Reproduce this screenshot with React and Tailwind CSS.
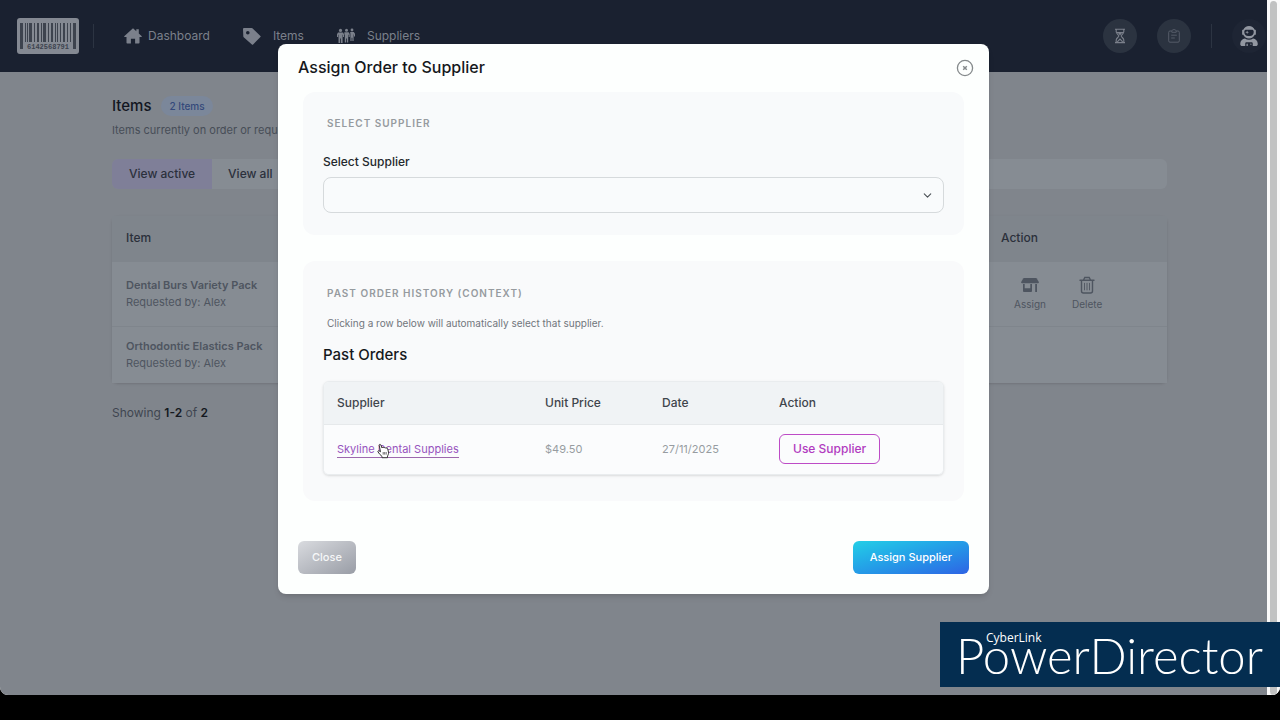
import { useState } from 'react'
import { FaUserAstronaut } from 'react-icons/fa'
import { ChevronDown } from 'lucide-react'

const NAV = [
  { id: 'dashboard', label: 'Dashboard' },
  { id: 'items', label: 'Items' },
  { id: 'suppliers', label: 'Suppliers' },
]

const ITEMS = [
  { id: 1, name: 'Dental Burs Variety Pack', by: 'Alex', actions: true },
  { id: 2, name: 'Orthodontic Elastics Pack', by: 'Alex', actions: false },
]

const PAST_ORDERS = [
  { id: 1, supplier: 'Skyline Dental Supplies', price: '$49.50', date: '27/11/2025' },
]

// [x, width] of each bar in the logo
const BARS = [
  [3, 3], [8, 1], [10, 1], [12, 3], [17, 1], [20, 2], [24, 1], [26, 3], [31, 1], [34, 2],
  [38, 1], [40, 1], [43, 1], [46, 2], [50, 1], [53, 1], [56, 3],
]

function BarcodeLogo() {
  return (
    <svg width="62" height="36" viewBox="0 0 62 36" role="img" aria-label="Home">
      <rect width="62" height="36" rx="3" fill="#848992" />
      {BARS.map(([x, w], i) => (
        <rect key={x} x={x} y="5" width={w} height={i === 0 || i === BARS.length - 1 ? 26 : 19} fill="#3d434e" />
      ))}
      <text x="31" y="31" textAnchor="middle" fontSize="7" fontWeight="600" fontFamily="Liberation Mono, monospace" fill="#3d434e">
        6142568791
      </text>
    </svg>
  )
}

function HomeIcon() {
  return (
    <svg width="18" height="16" viewBox="0 0 18 16" fill="currentColor">
      <path d="M9 .3 12.300 3.200V1.300h2.500v4.200L17.800 8.200q.3.700-.5.800H15.500v5.700q0 .8-.8.800h-3.600v-4.800H6.900v4.800H3.300q-.8 0-.8-.8V9H.700Q-.100 8.900.200 8.200z" />
    </svg>
  )
}

function TagIcon() {
  return (
    <svg width="18" height="17" viewBox="0 0 18 17" fill="currentColor" fillRule="evenodd">
      <path d="M1 0h7.500q.5 0 .9.300l8 7.600q.6.600 0 1.200l-7.300 7.400q-.6.500-1.200 0L.700 9.200Q.300 8.800.300 8.300L0 1Q0 0 1 0zM4.800 3a1.800 1.800 0 1 0 0 3.600 1.800 1.800 0 0 0 0-3.600z" />
    </svg>
  )
}

function PeopleIcon() {
  return (
    <svg width="18" height="16" viewBox="0 0 18 16" fill="currentColor">
      <circle cx="3.500" cy="2.400" r="1.600" />
      <path d="M1 4.600h5l1 1.600V9H6V6.800h-.4V15H3.900v-4.600h-.8V15H1.500V6.800h-.4V9H0V6.200z" />
      <circle cx="9.500" cy="2.200" r="1.500" />
      <path d="M7.300 4.300h4.400l1 1.700V9h-1V6.800h-.5V14.500H9.900v-4h-.8v4H7.800V6.800h-.4z" />
      <circle cx="15" cy="2" r="1.400" />
      <path d="M13.200 4h3.600L18 5.800V8.400h-1V6.500h-.4V13h-1.200V9.800h-.8V13h-1.200V6z" />
    </svg>
  )
}

function HourglassIcon() {
  return (
    <svg width="12" height="16" viewBox="0 0 12 16" fill="none" stroke="currentColor" strokeWidth="1.100">
      <path d="M1 1.200h10M1 14.600h10M2.200 1.200v2.600c0 1.700 2.600 3 2.600 4.100s-2.600 2.400-2.600 4.100v2.600M9.800 1.200v2.600c0 1.700-2.600 3-2.600 4.100s2.600 2.400 2.600 4.100v2.600M3 4.500h6M3.300 13.800 6 11l2.700 2.800" />
      <path d="M4 5h4L6 7.500z" fill="currentColor" stroke="none" />
    </svg>
  )
}

function ClipboardIcon() {
  return (
    <svg width="12" height="14" viewBox="0 0 12 14" fill="none" stroke="currentColor" strokeWidth="1">
      <path d="M4 2H2Q.700 2 .700 3.300v8.600Q.700 13.200 2 13.200h8q1.300 0 1.300-1.300V3.300Q11.300 2 10 2H8" />
      <path d="M3.800 1.800 5 .700h2l1.200 1.100v1.500H3.800zM3.200 6.200h5.600M3.200 9h3.600" />
    </svg>
  )
}

function StoreIcon() {
  return (
    <svg width="18" height="18" viewBox="0 0 18 18" fill="currentColor" fillRule="evenodd">
      <path d="M3 2h12q.5 0 .8.500L17.800 6q.3 1.300-.8 1.300H1Q-.100 7.300.200 6l2-3.500Q2.500 2 3 2z" />
      <path d="M2 8h1.700v4.300h5.600V8H11v7q0 .9-.9.900H2.900Q2 15.900 2 15zM14.200 8H16v7.900h-1.800z" />
    </svg>
  )
}

function TrashIcon() {
  return (
    <svg width="16" height="18" viewBox="0 0 16 18" fill="none" stroke="currentColor" strokeLinecap="round">
      <path d="M1 4.200h14M4.500 4 5.800 1.500h4.400L11.500 4M2.500 4.500V15q0 2 2 2h7q2 0 2-2V4.500" strokeWidth="1.400" />
      <path d="M5.500 7.300v6.600M8 7.300v6.600M10.500 7.300v6.600" strokeWidth=".9" />
    </svg>
  )
}

function HandCursor() {
  return (
    <svg width="13" height="16" viewBox="0 0 13 16" className="pointer-events-none absolute top-0.5 left-10">
      <path
        d="M3.500 8.800 2.200 2.300C2 1.300 3.400.900 3.800 1.900L5 5c.3-.9 1.700-.9 2 0 .4-.7 1.600-.5 1.900.3.500-.6 1.600-.3 1.800.5l.8 3.300c.3 1.800-.5 2.900-1 4v1.600H5v-1.300C3.700 12.300 2 10.700 1 8.900c-.4-1 .6-1.600 1.300-.9z"
        fill="#fff" stroke="#333" strokeWidth="1"
      />
      <path d="M6.200 9v2.600M7.700 9v2.600M9.200 9v2.600" stroke="#333" strokeWidth=".7" />
    </svg>
  )
}

const NAV_ICONS = {
  dashboard: <HomeIcon />,
  items: <TagIcon />,
  suppliers: <PeopleIcon />,
}

function Header() {
  return (
    <header className="flex h-[72px] shrink-0 items-center overflow-hidden bg-[#1a2130] pr-px pl-[17px] text-[#7b808b]">
      <a href="#home"><BarcodeLogo /></a>
      <div className="ml-3.5 h-6 w-px bg-[#2c3442]" />
      <nav className="ml-[30px] flex items-center gap-[33px] text-xs">
        {NAV.map(n => (
          <a key={n.id} href={`#${n.id}`} className={`flex items-center ${n.id === 'dashboard' ? 'gap-1.5' : 'gap-3'}`}>
            {NAV_ICONS[n.id]}
            <span>{n.label}</span>
          </a>
        ))}
      </nav>
      <div className="ml-auto flex items-center">
        <button aria-label="Pending" className="flex size-[34px] items-center justify-center rounded-full bg-[#2b3340]"><HourglassIcon /></button>
        <button aria-label="Orders" className="ml-5 flex size-[34px] items-center justify-center rounded-full bg-[#2b3340] text-[#555c68]"><ClipboardIcon /></button>
        <div className="ml-5 h-6 w-px bg-[#2c3442]" />
        <button aria-label="Account" className="ml-5 flex size-[34px] items-center justify-center rounded-full bg-[#1e2534] text-[#9297a1]">
          <FaUserAstronaut size={20} />
        </button>
      </div>
    </header>
  )
}

function ItemsPage() {
  return (
    <main className="flex-1 pr-[100px] pl-28 pt-[22px]">
      <div className="flex items-center gap-2.5">
        <h1 className="text-[15px] leading-6 font-medium text-[#12161f]">Items</h1>
        <span className="rounded-full bg-[#7b879a] px-2 text-[10px] leading-5 font-medium text-[#34497a]">2 Items</span>
      </div>
      <p className="text-[11px] leading-6 text-[#474d57]">Items currently on order or requested</p>

      <div className="mt-[17px] flex h-[30px] overflow-hidden rounded-md bg-[#868c93] text-xs font-medium text-[#2b303c]">
        <button className="bg-[#7f7f98] px-[17px]">View active</button>
        <button className="px-4">View all</button>
        <input type="search" aria-label="Search items" className="min-w-0 flex-1 bg-transparent outline-none" />
      </div>

      <table className="mt-[27px] w-full rounded-md text-left shadow-sm">
        <thead>
          <tr className="h-[45px] bg-[#7f858c] text-xs text-[#2b303b]">
            <th className="px-3.5 font-medium">Item</th>
            <th className="w-[180px] px-3.5 font-medium">Action</th>
          </tr>
        </thead>
        <tbody className="bg-[#868c93]">
          {ITEMS.map(item => (
            <tr key={item.id} className="h-[57px] border-t border-[#7f858c] text-[11px] leading-[17px] text-[#4e5560]">
              <td className="px-3.5">
                <div className="font-semibold">{item.name}</div>
                <div>Requested by: {item.by}</div>
              </td>
              <td className="px-6">
                {item.actions && (
                  <div className="flex gap-[26px] py-3.5 pl-[3px] text-[10px] leading-4 whitespace-nowrap">
                    <button className="flex flex-col items-center gap-0.5"><StoreIcon />Assign</button>
                    <button className="flex flex-col items-center gap-0.5"><TrashIcon />Delete</button>
                  </div>
                )}
              </td>
            </tr>
          ))}
        </tbody>
      </table>

      <p className="mt-5 text-xs leading-5 text-[#3f4550]">
        Showing <b className="font-semibold text-[#141820]">1-2</b> of <b className="font-semibold text-[#141820]">2</b>
      </p>
    </main>
  )
}

function AssignModal() {
  const [supplier, setSupplier] = useState('')

  return (
    <div role="dialog" aria-labelledby="assign-title" className="w-full max-w-[711px] rounded-lg bg-[#fdfffe] pb-5 shadow-md">
      <div className="flex h-12 items-center justify-between pr-[15px] pl-5">
        <h2 id="assign-title" className="pb-0.5 text-base font-medium text-[#15181c]">Assign Order to Supplier</h2>
        <button aria-label="Close dialog" className="text-[#858a8c]">
          <svg width="18" height="18" viewBox="0 0 18 18" fill="none" stroke="currentColor">
            <circle cx="9" cy="9" r="7.600" strokeWidth="1.300" />
            <path d="m7.200 7.200 3.600 3.600m0-3.600-3.600 3.600" strokeWidth="1.500" />
          </svg>
        </button>
      </div>

      <div className="px-[25px]">
        <section className="rounded-xl bg-[#f8fafb] px-5 pt-[21px] pb-[22px]">
          <h3 className="pl-1 text-[10px] leading-5 font-semibold tracking-widest text-[#969b9f]">SELECT SUPPLIER</h3>
          <label htmlFor="supplier" className="mt-5 block text-xs leading-[18px] font-medium text-[#24282c]">Select Supplier</label>
          <div className="relative mt-1.5">
            <select
              id="supplier"
              value={supplier}
              onChange={e => setSupplier(e.target.value)}
              className="h-9 w-full appearance-none rounded-lg border border-[#d6dadc] bg-[#f9fbfc] px-3 text-xs"
            >
              <option value=""></option>
              {PAST_ORDERS.map(o => <option key={o.id} value={o.supplier}>{o.supplier}</option>)}
            </select>
            <ChevronDown size={13} className="pointer-events-none absolute top-3 right-2.5 text-[#4b5055]" />
          </div>
        </section>

        <section className="mt-[26px] rounded-xl bg-[#f9fafb] px-5 pt-[22px] pb-[26px]">
          <h3 className="pl-1 text-[10px] leading-5 font-semibold tracking-widest text-[#969b9f]">PAST ORDER HISTORY (CONTEXT)</h3>
          <p className="mt-3 pl-1 text-[10px] leading-4 text-[#71767b]">Clicking a row below will automatically select that supplier.</p>
          <h4 className="mt-3 text-[15px] leading-6 font-medium text-[#15181c]">Past Orders</h4>

          <div className="mt-3.5 overflow-hidden rounded-md border border-[#e9ecee] shadow-sm">
            <table className="w-full table-fixed text-left">
              <thead>
                <tr className="h-[42px] border-b border-[#e6e9eb] bg-[#f0f3f5] text-xs text-[#3f454c]">
                  <th className="w-[208px] px-[13px] font-medium">Supplier</th>
                  <th className="w-[117px] px-[13px] font-medium">Unit Price</th>
                  <th className="w-[117px] px-[13px] font-medium">Date</th>
                  <th className="px-[13px] font-medium">Action</th>
                </tr>
              </thead>
              <tbody>
                {PAST_ORDERS.map(o => (
                  <tr key={o.id} className="h-[50px] bg-[#fbfcfd] text-[11px] text-[#979ca1]">
                    <td className="px-[13px]">
                      <a href="#supplier" className="relative inline-block border-b border-[#9d68ad] leading-4 text-[#9753bd]">
                        {o.supplier}
                        <HandCursor />
                      </a>
                    </td>
                    <td className="px-[13px]">{o.price}</td>
                    <td className="px-[13px]">{o.date}</td>
                    <td className="px-[13px]">
                      <button
                        onClick={() => setSupplier(o.supplier)}
                        className="h-[30px] rounded-md border border-[#bd4bc6] px-[13px] text-xs font-medium text-[#b13bc0]"
                      >
                        Use Supplier
                      </button>
                    </td>
                  </tr>
                ))}
              </tbody>
            </table>
          </div>
        </section>
      </div>

      <div className="mt-10 flex justify-between px-5 text-[11px] font-medium text-white">
        <button className="h-[33px] rounded-md bg-linear-to-br from-[#d9dbdf] to-[#999da6] px-3.5 text-[#f6f7f8]">Close</button>
        <button className="h-[33px] rounded-md bg-linear-to-br from-[#25cfe6] to-[#2e63e4] px-[17px]">Assign Supplier</button>
      </div>
    </div>
  )
}

export default function App() {
  return (
    <div className="flex min-h-screen flex-col bg-black pb-[25px] font-['Inter',sans-serif]">
      <div className="relative flex flex-1 overflow-hidden rounded-b-lg bg-white">
        <div className="relative flex min-w-0 flex-1 flex-col bg-[#80858c]">
          <Header />
          <ItemsPage />
          <div className="absolute inset-0 flex items-start justify-center pt-11">
            <AssignModal />
          </div>
        </div>

        {/* scrollbar */}
        <div className="flex w-[13px] bg-[#fafafa] px-[3px] pt-px">
          <div className="w-full rounded-full bg-[#c1c2c2]" />
        </div>
      </div>

      {/* watermark */}
      <div className="fixed right-0 bottom-[33px] h-[65px] w-[340px] bg-[#042d50] pl-4 whitespace-nowrap text-white">
        <span className="absolute top-2 left-[46px] font-['Open_Sans',sans-serif] text-xs leading-4">CyberLink</span>
        <span className="block font-['Lato',sans-serif] text-[49px] leading-[66px] font-light">PowerDirector</span>
      </div>
    </div>
  )
}
